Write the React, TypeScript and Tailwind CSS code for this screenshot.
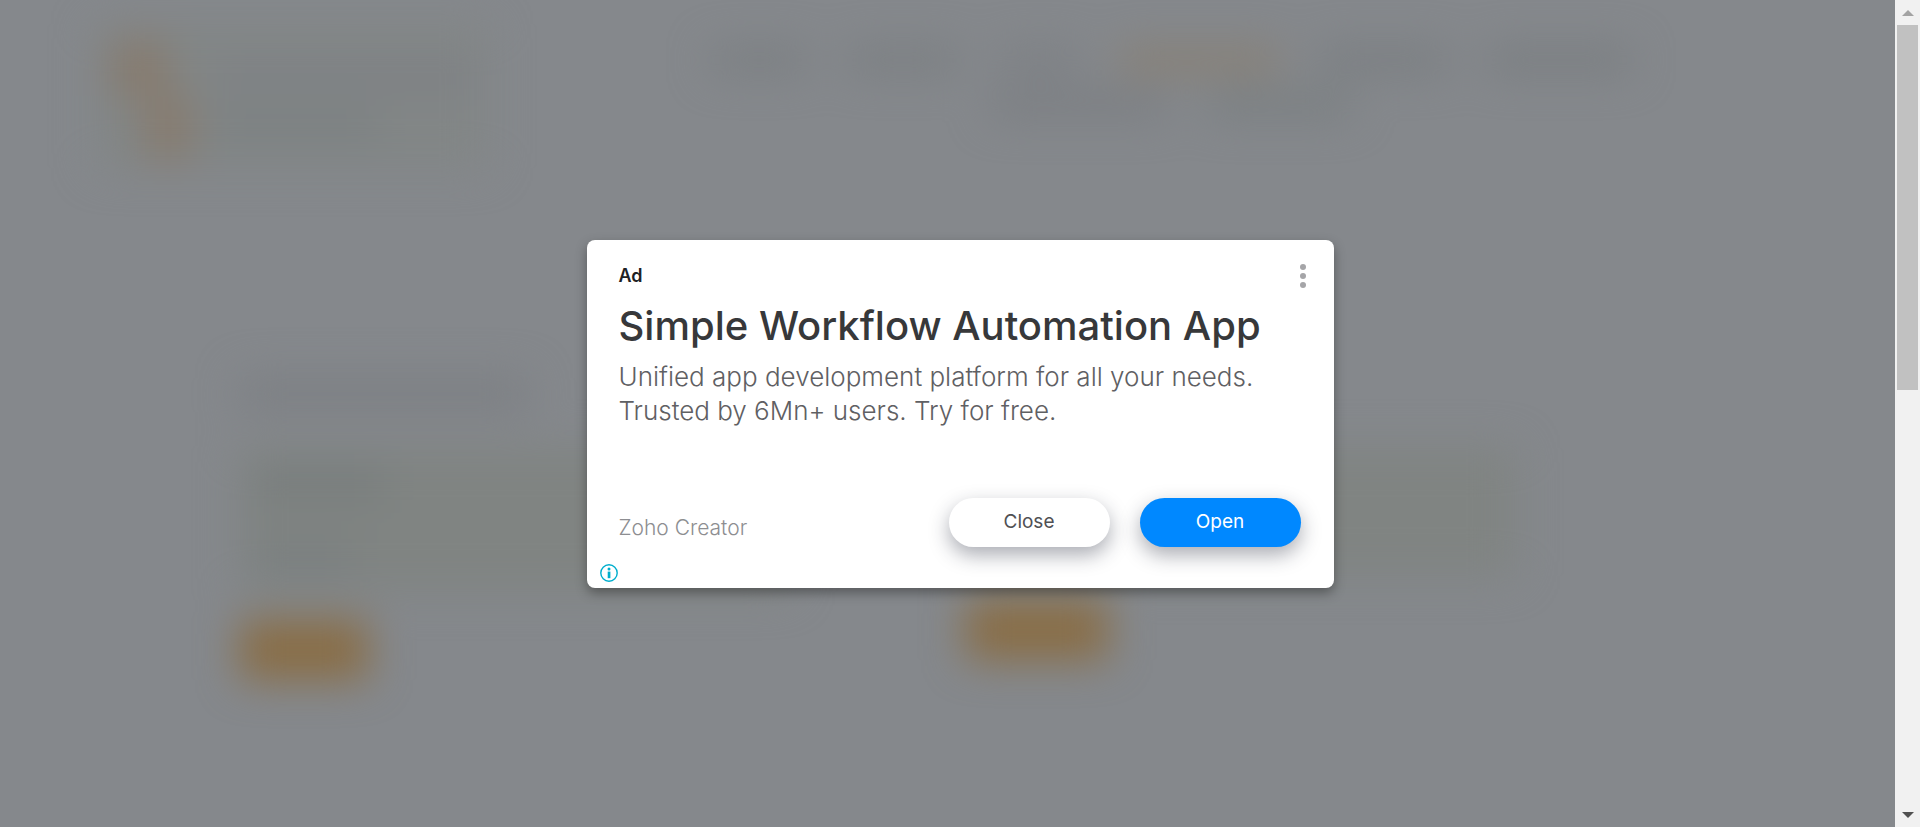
import type { ReactNode } from "react";

function Smudge({ className }: { className: string }) {
  return <div className={`shrink-0 rounded ${className}`} />;
}

function BlurredPage() {
  return (
    <div aria-hidden="true" className="min-w-0 flex-1 overflow-hidden bg-[#85888c]">
      <div className="px-24 pt-6 blur-[20px]">
        <header className="flex items-start justify-between">
          <div className="flex h-36 w-[392px] gap-6 rounded bg-[#828686] p-4">
            <div className="flex w-20 flex-col">
              <Smudge className="h-14 w-14 bg-[#877b6e]" />
              <Smudge className="h-16 w-12 self-end bg-[#877b6e]" />
            </div>
            <div className="flex flex-1 flex-col gap-6 pt-6">
              <Smudge className="h-6 w-full bg-[#7d7f84]" />
              <Smudge className="h-6 w-40 bg-[#7a7f81]" />
            </div>
          </div>
          <nav className="mr-32 flex w-[1000px] flex-wrap justify-center gap-x-10 gap-y-5 pt-6">
            <Smudge className="h-6 w-24 bg-[#7a7e81]" />
            <Smudge className="h-6 w-28 bg-[#7a7e81]" />
            <Smudge className="h-6 w-20 bg-[#7c7f83]" />
            <Smudge className="h-6 w-40 bg-[#887f72]" />
            <Smudge className="h-6 w-32 bg-[#797d80]" />
            <Smudge className="h-6 w-36 bg-[#797d80]" />
            <Smudge className="h-6 w-44 bg-[#7a7d81]" />
            <Smudge className="h-6 w-36 bg-[#797e80]" />
          </nav>
        </header>
        <main className="pt-52 pr-[284px] pl-36">
          <Smudge className="h-9 w-72 bg-[#7d8084]" />
          <div className="mt-9 grid grid-cols-2 gap-44">
            <section>
              <div className="flex h-36 flex-col justify-around rounded bg-[#808482] px-4">
                <Smudge className="h-8 w-32 bg-[#787d7d]" />
                <Smudge className="h-8 w-24 bg-[#7a7f80]" />
              </div>
              <Smudge className="mt-7 h-[60px] w-[128px] bg-[#896d45]" />
            </section>
            <section>
              <div className="h-32 rounded bg-[#808482]" />
              <Smudge className="mt-6 h-[60px] w-[142px] bg-[#896d45]" />
            </section>
          </div>
        </main>
      </div>
    </div>
  );
}

function PageScrollbar() {
  return (
    <div aria-hidden="true" className="flex w-[25px] shrink-0 flex-col items-center bg-[#f1f1f1]">
      <div className="flex h-[25px] items-center">
        <svg width="12" height="6" viewBox="0 0 12 6" fill="#a3a3a3">
          <path d="M0 6 6 0l6 6z" />
        </svg>
      </div>
      <div className="w-full flex-1 px-0.5">
        <div className="h-[47%] bg-[#c1c1c1]" />
      </div>
      <div className="flex h-[25px] items-center">
        <svg width="12" height="6" viewBox="0 0 12 6" fill="#505050">
          <path d="M0 0h12L6 6z" />
        </svg>
      </div>
    </div>
  );
}

function PillButton({ className, children }: { className: string; children: ReactNode }) {
  return (
    <button
      type="button"
      className={`h-[49px] w-[161px] rounded-full text-[19px] shadow-[0_8px_20px_rgba(32,36,56,0.38)] ${className}`}
    >
      {children}
    </button>
  );
}

function AdCard() {
  return (
    <article className="flex min-h-[348px] w-[747px] flex-col rounded-lg bg-white shadow-[0_5px_12px_rgba(0,0,0,0.35)]">
      <div className="flex items-start justify-between pt-6 pr-7 pl-8">
        <span className="text-lg leading-6 font-semibold text-[#202124]">Ad</span>
        <button type="button" aria-label="More options">
          <svg width="6" height="24" viewBox="0 0 6 24" fill="#a5a5a8">
            <circle cx="3" cy="3" r="3" />
            <circle cx="3" cy="12" r="3" />
            <circle cx="3" cy="21" r="3" />
          </svg>
        </button>
      </div>
      <h1 className="mt-3.5 px-8 text-[40px] leading-[48px] font-medium whitespace-nowrap text-[#37383a]">
        Simple Workflow Automation App
      </h1>
      <p className="mt-2.5 px-8 text-[26px] leading-[34px] font-light text-[#5f6063]">
        Unified app development platform for all your needs.
        <br />
        Trusted by 6Mn+ users. Try for free.
      </p>
      <div className="mt-auto flex items-start justify-between pr-[33px] pl-8">
        <span className="pt-4 text-[21px] leading-7 font-light text-[#8d8e91]">Zoho Creator</span>
        <div className="flex gap-[30px]">
          <PillButton className="bg-white text-[#505053]">Close</PillButton>
          <PillButton className="bg-[#0088ff] text-white">Open</PillButton>
        </div>
      </div>
      <a href="#ad-info" aria-label="Ad information" className="mt-[17px] mb-1.5 ml-[13px] self-start">
        <svg className="block" width="18" height="18" viewBox="0 0 18 18" fill="#00aecd">
          <circle cx="9" cy="9" r="8.2" fill="none" stroke="#00aecd" strokeWidth="1.4" />
          <circle cx="9" cy="5.1" r="1.5" />
          <path d="M7.7 7.6h2.7v6.6H7.7z" />
        </svg>
      </a>
    </article>
  );
}

export default function App() {
  return (
    <div className="relative flex h-screen overflow-hidden font-['Inter','Liberation_Sans',sans-serif]">
      <BlurredPage />
      <PageScrollbar />
      <div className="absolute inset-0 flex items-center justify-center" role="dialog" aria-label="Ad">
        <AdCard />
      </div>
    </div>
  );
}
